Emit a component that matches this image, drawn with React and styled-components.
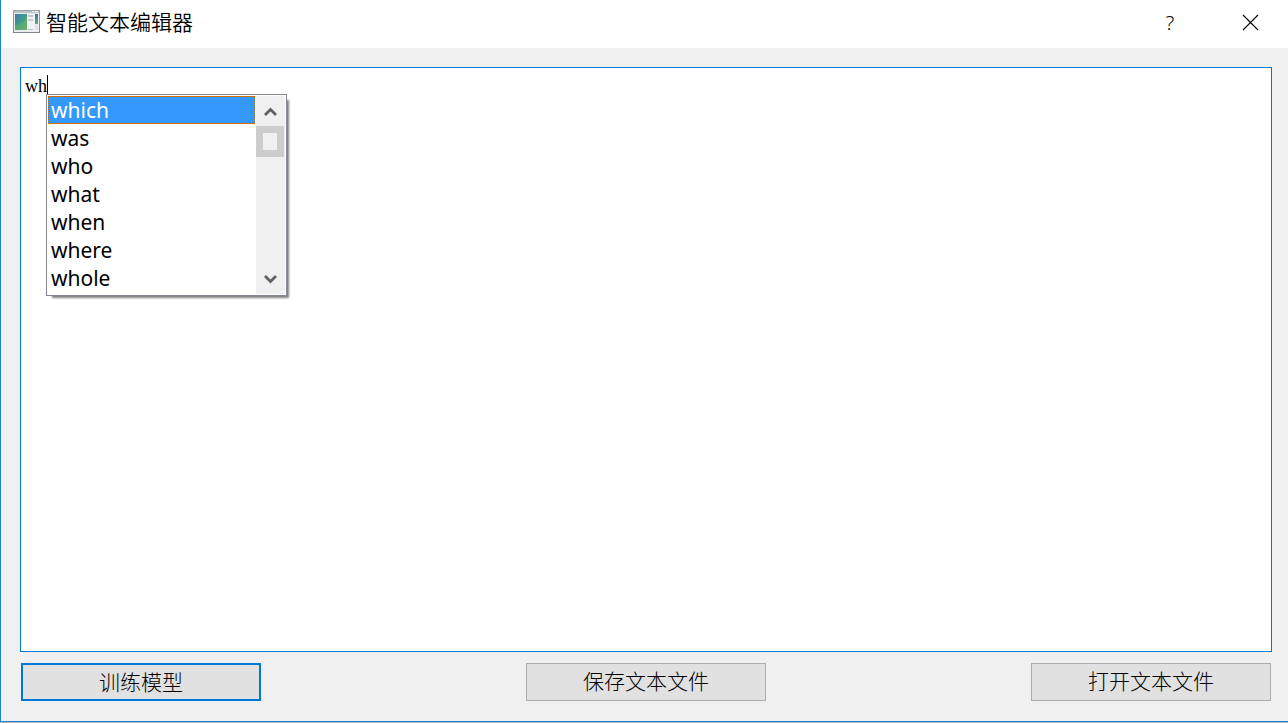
import React, { useState } from 'react'
import styled, { createGlobalStyle } from 'styled-components'

const words = ['which', 'was', 'who', 'what', 'when', 'where', 'whole']

function AppIcon() {
    return (
        <svg width="28" height="24" viewBox="0 0 28 24" aria-hidden="true">
            <defs>
                <linearGradient id="screen" x1="0" y1="0" x2="1" y2="1">
                    <stop offset="0" stopColor="#3f78a8" />
                    <stop offset="0.5" stopColor="#439a8c" />
                    <stop offset="1" stopColor="#6db86a" />
                </linearGradient>
                <linearGradient id="strip" x1="0" y1="0" x2="0" y2="1">
                    <stop offset="0" stopColor="#3a6ea5" />
                    <stop offset="1" stopColor="#62b070" />
                </linearGradient>
                <linearGradient id="frame" x1="0" y1="0" x2="0" y2="1">
                    <stop offset="0" stopColor="#9aa1a8" />
                    <stop offset="1" stopColor="#7f858c" />
                </linearGradient>
            </defs>
            <rect x="0" y="0" width="27" height="23" fill="url(#frame)" />
            <rect x="1" y="1" width="25" height="21" fill="#e9ebee" />
            <rect x="1" y="1" width="25" height="2" fill="#bcc3cb" />
            <rect x="19" y="1" width="2" height="1" fill="#f4f4f4" />
            <rect x="22" y="1" width="3" height="1" fill="#f4f4f4" />
            <rect x="2" y="4" width="12" height="16" fill="url(#screen)" />
            <path d="M2 15 Q8 15 14 8 V20 H2Z" fill="#68b267" opacity="0.45" />
            <rect x="14" y="4" width="12" height="17" fill="#f0f1f2" />
            <rect x="15" y="5" width="5" height="2" fill="#c3c6ca" />
            <rect x="15" y="9" width="5" height="2" fill="#c9ccd0" />
            <rect x="15" y="19" width="5" height="1" fill="#b9bcc0" />
            <rect x="22" y="4" width="3" height="10" fill="url(#strip)" />
            <rect x="22" y="14" width="3" height="6" fill="#dfe2e5" />
        </svg>
    )
}

function App() {
    const [text, setText] = useState('wh')
    const [selected, setSelected] = useState(0)

    return (
        <>
            <GlobalStyle />
            <Window>
                <TitleBar>
                    <AppIcon />
                    <Title>智能文本编辑器</Title>
                    <TitleButton aria-label="帮助">?</TitleButton>
                    <TitleButton aria-label="关闭">
                        <svg width="17" height="17" viewBox="0 0 17 17">
                            <path d="M1 1 L16 16 M16 1 L1 16" stroke="#000" strokeWidth="1.1" />
                        </svg>
                    </TitleButton>
                </TitleBar>
                <Content>
                    <Editor>
                        <TextArea
                            aria-label="文本"
                            spellCheck={false}
                            value={text}
                            onChange={(e) => setText(e.target.value)}
                        />
                        <Caret />
                        <Popup>
                            <List role="listbox" aria-label="候选词">
                                {words.map((word, i) => (
                                    <Word
                                        key={word}
                                        role="option"
                                        aria-selected={i === selected}
                                        $active={i === selected}
                                        onClick={() => setSelected(i)}
                                    >
                                        {word}
                                    </Word>
                                ))}
                            </List>
                            <ScrollBar>
                                <ScrollButton aria-label="向上">
                                    <svg width="13" height="10" viewBox="0 0 13 10">
                                        <path d="M1 9 L6.5 3.5 L12 9" fill="none" stroke="#606060" strokeWidth="2.8" />
                                    </svg>
                                </ScrollButton>
                                <Thumb />
                                <Track />
                                <ScrollButton aria-label="向下">
                                    <svg width="13" height="10" viewBox="0 0 13 10">
                                        <path d="M1 2 L6.5 7.5 L12 2" fill="none" stroke="#606060" strokeWidth="2.8" />
                                    </svg>
                                </ScrollButton>
                            </ScrollBar>
                        </Popup>
                    </Editor>
                    <Actions>
                        <Button $primary>训练模型</Button>
                        <Button>保存文本文件</Button>
                        <Button>打开文本文件</Button>
                    </Actions>
                </Content>
            </Window>
        </>
    )
}

export default App

const GlobalStyle = createGlobalStyle`
    * {
        box-sizing: border-box;
    }
    body {
        margin: 0;
        background: #b4b4b4;
        font-family: 'Noto Sans', 'Noto Sans CJK SC', sans-serif;
        color: #000;
    }
    button {
        font-family: inherit;
        color: inherit;
        padding: 0;
    }
`
const Window = styled.div`
    display: flex;
    flex-direction: column;
    height: calc(100vh - 1px);
    border-left: 1px solid #1883d7;
    border-bottom: 1px solid #1883d7;
    background: #f0f0f0;
`
const TitleBar = styled.header`
    display: flex;
    align-items: center;
    height: 48px;
    padding: 0 0 4px 12px;
    background: #fff;
`
const Title = styled.h1`
    flex: 1;
    margin: 0 0 0 5px;
    padding-bottom: 2px;
    font-family: 'Noto Sans CJK SC', sans-serif;
    font-size: 21px;
    font-weight: 350;
    line-height: 32px;
`
const TitleButton = styled.button`
    display: flex;
    align-items: center;
    justify-content: center;
    width: 84px;
    height: 44px;
    border: none;
    background: transparent;
    font-size: 20px;
    font-weight: 300;
    &:last-child {
        width: 76px;
    }
`
const Content = styled.main`
    flex: 1;
    display: flex;
    flex-direction: column;
    gap: 11px;
    padding: 19px 16px 20px 19px;
`
const Editor = styled.div`
    position: relative;
    flex: 1;
    display: flex;
`
const TextArea = styled.textarea`
    flex: 1;
    padding: 8px 4px;
    border: 1px solid #0078d7;
    outline: none;
    resize: none;
    background: #fff;
    color: #000;
    caret-color: transparent;
    font-family: 'Liberation Serif', 'Noto Sans CJK SC', serif;
    font-size: 18px;
    line-height: 21px;
`
const Caret = styled.span`
    position: absolute;
    left: 27px;
    top: 8px;
    width: 1px;
    height: 20px;
    background: #000;
`
const Popup = styled.div`
    position: absolute;
    left: 26px;
    top: 27px;
    display: flex;
    width: 241px;
    padding: 1px;
    border: 1px solid #828790;
    background: #fff;
    box-shadow: 4px 4px 2px -2px #808080;
`
const List = styled.ul`
    flex: 1;
    margin: 0 1px 2px 0;
    padding: 0;
    list-style: none;
`
const Word = styled.li`
    height: 28px;
    padding: 0 3px;
    font-size: 21px;
    line-height: 28px;
    color: ${({ $active }) => ($active ? '#fff' : '#000')};
    background: ${({ $active }) => ($active ? '#3399ff' : 'transparent')};
    outline: ${({ $active }) => ($active ? '1px dotted #cc6600' : 'none')};
    outline-offset: -1px;
`
const ScrollBar = styled.div`
    display: flex;
    flex-direction: column;
    width: 29px;
    background: #f0f0f0;
`
const ScrollButton = styled.button`
    display: flex;
    align-items: center;
    justify-content: center;
    width: 28px;
    height: 30px;
    border: none;
    background: transparent;
`
const Thumb = styled.div`
    width: 28px;
    height: 31px;
    border: 7px solid #cdcdcd;
    background: #f0f0f0;
`
const Track = styled.div`
    flex: 1;
`
const Button = styled.button`
    width: 240px;
    height: 38px;
    padding-bottom: 4px;
    border: ${({ $primary }) => ($primary ? '2px solid #0078d7' : '1px solid #adadad')};
    background: #e1e1e1;
    font-family: 'Noto Sans CJK SC', sans-serif;
    font-size: 21px;
    font-weight: 300;
    line-height: 32px;
`
const Actions = styled.div`
    display: flex;
    justify-content: space-between;
    padding: 0 1px;
`
